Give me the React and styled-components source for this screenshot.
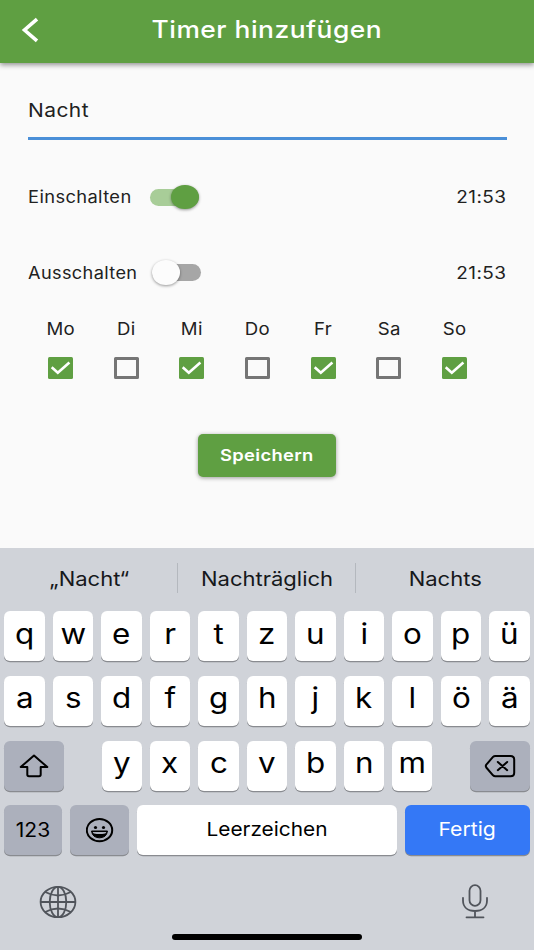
import React, { useState } from 'react'
import styled, { createGlobalStyle } from 'styled-components'

const GlobalStyle = createGlobalStyle`
    *{
        box-sizing: border-box;
    }
    body{
        margin: 0;
        background: #FAFAFA;
        font-family: Inter, "Liberation Sans", sans-serif;
    }
    button{
        font-family: inherit;
        border: none;
        padding: 0;
    }
`;

const weekdays = ['Mo', 'Di', 'Mi', 'Do', 'Fr', 'Sa', 'So'];
const firstRow = ['q', 'w', 'e', 'r', 't', 'z', 'u', 'i', 'o', 'p', 'ü'];
const secondRow = ['a', 's', 'd', 'f', 'g', 'h', 'j', 'k', 'l', 'ö', 'ä'];
const thirdRow = ['y', 'x', 'c', 'v', 'b', 'n', 'm'];

function Switch({ on, onClick }) {
    return (
        <SwitchStyled type="button" role="switch" aria-checked={on} $on={on} onClick={onClick}>
            <span />
        </SwitchStyled>
    )
}

function DayCheckbox({ day, checked, onClick }) {
    return (
        <DayStyled>
            <Text $size={16.6} $stretch={1.12} $spacing={0.3}>{day}</Text>
            <Box type="button" role="checkbox" aria-label={day} aria-checked={checked} $checked={checked} onClick={onClick}>
                {checked && (
                    <svg width="25" height="22" viewBox="0 0 25 22" fill="none">
                        <path d="M3.7 10.3 L9.8 15.8 L21.4 5.6" stroke="#FFFFFF" strokeWidth="2.6" />
                    </svg>
                )}
            </Box>
        </DayStyled>
    )
}

function Keyboard({ onKey, onDelete }) {
    const letter = (char) => (
        <Key key={char} type="button" onClick={() => onKey(char)}>
            <Text $size={28} $stretch={1.12}>{char}</Text>
        </Key>
    );

    return (
        <KeyboardStyled>
            <Suggestions>
                <div><Text $size={20} $stretch={1.1}>„Nacht“</Text></div>
                <div><Text $size={20} $stretch={1.1}>Nachträglich</Text></div>
                <div><Text $size={20} $stretch={1.1}>Nachts</Text></div>
            </Suggestions>
            <Keys>
                <KeyRow>{firstRow.map(letter)}</KeyRow>
                <KeyRow>{secondRow.map(letter)}</KeyRow>
                <ShiftRow>
                    <Key type="button" $dark aria-label="Umschalt">
                        <svg width="32" height="26" viewBox="0 0 32 26" fill="none" stroke="#000000" strokeWidth="2" strokeLinejoin="round">
                            <path d="M16 2.5 L29.3 14.1 H22.7 V21.5 Q22.7 23.2 21 23.2 H11 Q9.3 23.2 9.3 21.5 V14.1 H2.7 Z" />
                        </svg>
                    </Key>
                    <KeyRow $columns={7}>{thirdRow.map(letter)}</KeyRow>
                    <Key type="button" $dark aria-label="Löschen" onClick={onDelete}>
                        <svg width="32" height="24" viewBox="0 0 32 24" fill="none" stroke="#000000" strokeWidth="2" strokeLinecap="round" strokeLinejoin="round">
                            <path d="M11.3 1.9 H26.5 Q30.2 1.9 30.2 5.4 V18.8 Q30.2 22.3 26.5 22.3 H11.3 Q10 22.3 9 21.3 L2.3 13.5 Q1.3 12.1 2.3 10.7 L9 2.9 Q10 1.9 11.3 1.9 Z" />
                            <path d="M13.8 8 L23.2 16.2 M23.2 8 L13.8 16.2" />
                        </svg>
                    </Key>
                </ShiftRow>
                <BottomRow>
                    <NumberKey type="button" $dark>
                        <Text $size={19.5} $stretch={1.08}>123</Text>
                    </NumberKey>
                    <Key type="button" $dark aria-label="Emoji">
                        <svg width="28" height="25" viewBox="0 0 28 25" fill="none">
                            <ellipse cx="13.5" cy="12.2" rx="12.7" ry="11.1" stroke="#000000" strokeWidth="2" />
                            <ellipse cx="9.5" cy="9.4" rx="1.6" ry="1.5" fill="#000000" />
                            <ellipse cx="17.5" cy="9.4" rx="1.6" ry="1.5" fill="#000000" />
                            <path d="M5.5 13 H21.5 Q20.5 19.8 13.5 19.8 Q6.5 19.8 5.5 13 Z" fill="#000000" stroke="#000000" strokeWidth="1" strokeLinejoin="round" />
                            <path d="M6.7 14 H20.3 Q19.9 15.3 19.1 15.5 Q13.5 16.6 7.9 15.5 Q7.1 15.3 6.7 14 Z" fill="#ACB0BC" />
                        </svg>
                    </Key>
                    <SpaceKey type="button" onClick={() => onKey(' ')}>
                        <Text $size={19.3} $stretch={1.08}>Leerzeichen</Text>
                    </SpaceKey>
                    <SpaceKey type="button" $primary>
                        <Text $size={19.3} $stretch={1.1}>Fertig</Text>
                    </SpaceKey>
                </BottomRow>
            </Keys>
            <SystemRow>
                <svg width="38" height="34" viewBox="0 0 38 34" fill="none" stroke="#50545B" strokeWidth="1.8">
                    <ellipse cx="19" cy="17" rx="17.4" ry="15.2" />
                    <ellipse cx="19" cy="17" rx="8.3" ry="15.2" />
                    <path d="M19 1.8 V32.2 M1.6 17 H36.4" />
                    <path d="M6.2 7 Q19 14 31.8 7 M6.2 27 Q19 20 31.8 27" />
                </svg>
                <svg width="28" height="36" viewBox="0 0 28 36" fill="none" stroke="#50545B" strokeWidth="1.8">
                    <rect x="8.5" y="1.2" width="11" height="20.6" rx="5.5" />
                    <path d="M2 13.8 V16.6 C2 23.4 7 27 14 27 C21 27 26 23.4 26 16.6 V13.8 M14 27 V33.3 M5.5 33.3 H22.5" strokeLinecap="round" />
                </svg>
            </SystemRow>
            <HomeIndicator />
        </KeyboardStyled>
    )
}

function App() {
    const [name, setName] = useState('Nacht');
    const [switches, setSwitches] = useState({ on: true, off: false });
    const [days, setDays] = useState(['Mo', 'Mi', 'Fr', 'So']);

    const toggleSwitch = (key) => {
        setSwitches({ ...switches, [key]: !switches[key] });
    };

    const toggleDay = (day) => {
        setDays(days.includes(day) ? days.filter(item => item !== day) : [...days, day]);
    };

    return (
        <AppStyled>
            <GlobalStyle />
            <Header>
                <BackButton type="button" aria-label="Zurück">
                    <svg width="18" height="26" viewBox="0 0 18 26" fill="none">
                        <path d="M16 2.2 L3.5 13 L16 23.8" stroke="#FFFFFF" strokeWidth="3.6" />
                    </svg>
                </BackButton>
                <Title as="h1" $size={24} $weight={550} $stretch={1.1} $spacing={0.45}>Timer hinzufügen</Title>
            </Header>
            <Form>
                <NameField>
                    <Text $size={18.7} $stretch={1.12} $spacing={0.4} $origin="left">{name}</Text>
                </NameField>
                <TimerRow>
                    <Text $size={16.8} $stretch={1.09} $spacing={0.35} $origin="left">Einschalten</Text>
                    <SwitchSlot $left={122}>
                        <Switch on={switches.on} onClick={() => toggleSwitch('on')} />
                    </SwitchSlot>
                    <Text $size={16.8} $stretch={1.13} $spacing={0.4} $origin="right">21:53</Text>
                </TimerRow>
                <TimerRow>
                    <Text $size={16.8} $stretch={1.08} $spacing={0.35} $origin="left">Ausschalten</Text>
                    <SwitchSlot $left={124.5}>
                        <Switch on={switches.off} onClick={() => toggleSwitch('off')} />
                    </SwitchSlot>
                    <Text $size={16.8} $stretch={1.13} $spacing={0.4} $origin="right">21:53</Text>
                </TimerRow>
                <Days>
                    {weekdays.map(day => (
                        <DayCheckbox key={day} day={day} checked={days.includes(day)} onClick={() => toggleDay(day)} />
                    ))}
                </Days>
                <SaveButton type="button">
                    <Text $size={16.4} $weight={580} $stretch={1.12} $spacing={0.3}>Speichern</Text>
                </SaveButton>
            </Form>
            <Keyboard onKey={(char) => setName(name + char)} onDelete={() => setName(name.slice(0, -1))} />
        </AppStyled>
    )
}

const Text = styled.span`
    display: block;
    margin: 0;
    font-size: ${props => props.$size}px;
    font-weight: ${props => props.$weight || 400};
    letter-spacing: ${props => props.$spacing || 0}px;
    line-height: 1.2;
    white-space: nowrap;
    transform: scaleX(${props => props.$stretch || 1});
    transform-origin: ${props => props.$origin || 'center'};
`;

const Title = styled(Text)`
    padding-top: 2px;
`;

const AppStyled = styled.div`
    display: flex;
    flex-direction: column;
    width: 534px;
    height: 950px;
    overflow: hidden;
    color: #212121;
`;

const Header = styled.header`
    display: grid;
    grid-template-columns: 60px 1fr 60px;
    align-items: center;
    justify-items: center;
    flex: none;
    height: 63px;
    padding-bottom: 4px;
    background: #5F9F42;
    color: #FFFFFF;
    box-shadow: 0 2px 5px rgba(0, 0, 0, 0.42);
`;

const BackButton = styled.button`
    display: flex;
    background: none;
`;

const Form = styled.main`
    display: flex;
    flex-direction: column;
    height: 485px;
    padding: 22px 27.5px 0;
`;

const NameField = styled.div`
    display: flex;
    align-items: center;
    height: 55px;
    margin-bottom: 19px;
    border-bottom: 3px solid #4A8FD8;
`;

const TimerRow = styled.div`
    display: flex;
    align-items: center;
    justify-content: space-between;
    position: relative;
    height: 75.4px;
    padding-top: 1px;
`;

const SwitchSlot = styled.div`
    position: absolute;
    left: ${props => props.$left}px;
    display: flex;
`;

const SwitchStyled = styled.button`
    display: flex;
    align-items: center;
    justify-content: ${props => props.$on ? 'flex-end' : 'flex-start'};
    width: 49px;
    height: 17px;
    border-radius: 9px;
    background: ${props => props.$on ? '#A8CD98' : '#A6A6A6'};
    span{
        flex: none;
        width: 27.5px;
        height: 24.5px;
        border-radius: 50%;
        background: ${props => props.$on ? '#5F9F42' : '#FCFCFC'};
        box-shadow: 0 1px 3px rgba(0, 0, 0, 0.4);
    }
`;

const Days = styled.div`
    display: grid;
    grid-template-columns: repeat(7, 1fr);
    width: 460px;
    margin-top: 10px;
`;

const DayStyled = styled.div`
    display: flex;
    flex-direction: column;
    align-items: center;
    gap: 17px;
`;

const Box = styled.button`
    display: flex;
    width: 25px;
    height: 22px;
    border: ${props => props.$checked ? 'none' : '3px solid #757575'};
    border-radius: 1.5px;
    background: ${props => props.$checked ? '#5F9F42' : 'transparent'};
`;

const SaveButton = styled.button`
    display: flex;
    align-items: center;
    justify-content: center;
    align-self: center;
    width: 138px;
    height: 43px;
    margin-top: 55px;
    padding-top: 2px;
    border-radius: 5px;
    background: #5F9F42;
    color: #FFFFFF;
    box-shadow: 0 1px 4px rgba(0, 0, 0, 0.38);
`;

const KeyboardStyled = styled.section`
    flex: none;
    display: flex;
    flex-direction: column;
    height: 402px;
    background: #D0D3D9;
    color: #000000;
`;

const Suggestions = styled.div`
    display: grid;
    grid-template-columns: 177px 178px 1fr;
    height: 63.4px;
    padding: 15px 0 18px;
    div{
        display: flex;
        align-items: center;
        justify-content: center;
        padding: 2px 0 0 1px;
        color: #16181B;
    }
    div + div{
        border-left: 1px solid #B4B8BE;
    }
`;

const Keys = styled.div`
    display: grid;
    grid-template-rows: repeat(4, 50px);
    row-gap: 14.6px;
    padding: 0 4.3px;
`;

const KeyRow = styled.div`
    display: grid;
    grid-template-columns: repeat(${props => props.$columns || 11}, 1fr);
    column-gap: 8.2px;
`;

const ShiftRow = styled.div`
    display: grid;
    grid-template-columns: 60px 331px 60px;
    justify-content: space-between;
`;

const BottomRow = styled.div`
    display: grid;
    grid-template-columns: 58px 58.5px 1fr 125px;
    column-gap: 8.2px;
`;

const Key = styled.button`
    display: flex;
    align-items: center;
    justify-content: center;
    min-width: 0;
    padding-bottom: ${props => props.$dark ? 0 : 4}px;
    border-radius: 6px;
    background: ${props => props.$primary ? '#3478F6' : props.$dark ? '#ACB0BC' : '#FFFFFF'};
    color: ${props => props.$primary ? '#FFFFFF' : '#000000'};
    box-shadow: 0 1.3px 0 #898B90;
`;

const NumberKey = styled(Key)`
    padding-top: 2px;
`;

const SpaceKey = styled(Key)`
    padding-bottom: 2px;
`;

const SystemRow = styled.div`
    display: flex;
    align-items: center;
    justify-content: space-between;
    height: 36px;
    margin-top: 28.5px;
    padding: 0 45px 0 39px;
`;

const HomeIndicator = styled.div`
    align-self: center;
    width: 190px;
    height: 6px;
    margin-top: 14.5px;
    border-radius: 3px;
    background: #000000;
`;

export default App;
